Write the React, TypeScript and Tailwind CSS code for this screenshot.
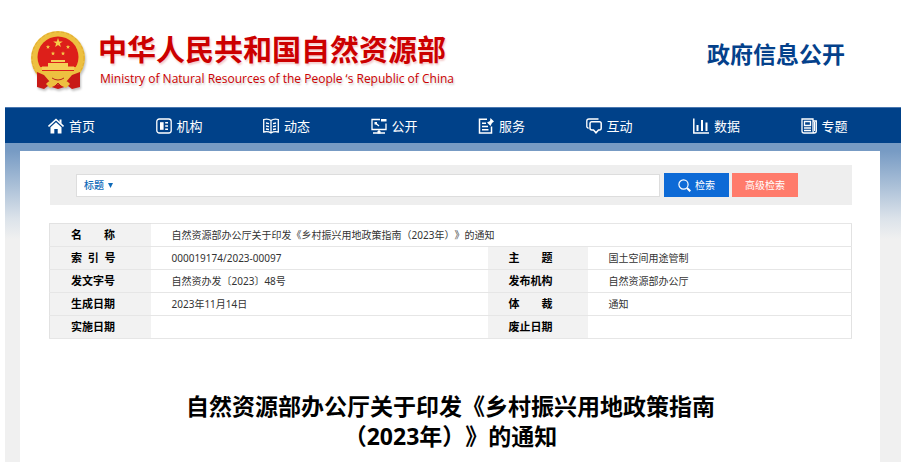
import type { ReactNode } from "react";

function Emblem() {
  const star = "M0 -5 L1.2 -1.6 L4.8 -1.5 L1.9 0.6 L2.9 4 L0 2 L-2.9 4 L-1.9 0.6 L-4.8 -1.5 L-1.2 -1.6 Z";
  return (
    <svg viewBox="0 0 56 60" className="h-[60px] w-14 shrink-0 drop-shadow-[1px_2px_1px_rgba(0,0,0,0.25)]" aria-hidden="true">
      <circle cx="28" cy="28" r="27" fill="#edc040" />
      <circle cx="28" cy="28" r="26" fill="none" stroke="#e0aa32" strokeWidth="1" strokeDasharray="3 2" />
      <circle cx="28" cy="27" r="20.500" fill="#dd1f1a" />
      <path d="M7 42 L14 45 L20 52 L28 48 L36 52 L42 45 L50 42 L50 57 L42 59 L38 56 L28 59 L18 56 L14 59 L7 57 Z" fill="#c81a17" />
      <path d="M10 37 H46 L44 43 L36 48 L28 45 L20 48 L12 43 Z" fill="#edc040" />
      <path d="M12 36.500 H44 V40 H12 Z M18 33 H38 V37 H18 Z M21 30 H35 V32 H21 Z" fill="#f5cf57" />
      <path d="M12 40.500 H44" stroke="#dd1f1a" strokeWidth="1" />
      <path d="M20 46 Q28 41 36 46 L33 50 Q38 51 40 54 L36 58 L28 54 L20 58 L16 54 Q18 51 23 50 Z" fill="#edc040" />
      <path d="M22 48 Q28 52 34 48 M25 56 L28 53 L31 56" fill="none" stroke="#b9221a" strokeWidth="1" />
      <g fill="#f6cf4a">
        <path d={star} transform="translate(28 13)" />
        <path d={star} transform="translate(18 17) scale(.45)" />
        <path d={star} transform="translate(38 17) scale(.45)" />
        <path d={star} transform="translate(23 23.500) scale(.45)" />
        <path d={star} transform="translate(33 23.500) scale(.45)" />
      </g>
    </svg>
  );
}

function Icon({ children }: { children: ReactNode }) {
  return (
    <svg viewBox="0 0 16 16" className="size-4 shrink-0" fill="none" stroke="currentColor" strokeWidth="1.300" aria-hidden="true">
      {children}
    </svg>
  );
}

const menu: { label: string; icon: ReactNode }[] = [
  {
    label: "首页",
    icon: (
      <>
        <path d="M0.500 8.500 L8 1.500 L15.500 8.500" strokeWidth="1.600" />
        <path d="M11.500 1.500 H13.500 V6 L11.500 4 Z M8 4.200 L13.500 9.200 V15.500 H9.700 V11 H6.300 V15.500 H2.500 V9.200 Z" fill="currentColor" stroke="none" />
      </>
    ),
  },
  {
    label: "机构",
    icon: (
      <>
        <rect x="0.800" y="1" width="14.400" height="14" rx="2.500" />
        <rect x="4" y="4.200" width="3.600" height="7.600" fill="currentColor" stroke="none" />
        <path d="M9.200 4.800 H12 M9.200 8 H12 M9.200 11.200 H12" strokeWidth="1.500" />
      </>
    ),
  },
  {
    label: "动态",
    icon: (
      <>
        <path d="M8 2.500 Q5 0.200 0.700 1.500 V14 Q5 13 8 15 Q11 13 15.300 14 V1.500 Q11 0.200 8 2.500 V15" />
        <path d="M3 5 L6 5.600 M3 8 L6 8.600 M3 11 L6 11.500 M13 5 L10 5.600 M13 8 L10 8.600 M13 11 L10 11.500" />
      </>
    ),
  },
  {
    label: "公开",
    icon: (
      <>
        <path d="M9 1.500 H1 V11.500 H15 V5.500 M8 11.500 V15 M2 15 H14" />
        <path d="M10 1 H15.500 V3.500 H10 Z M6.500 13 H9.500 V15.500 H6.500 Z" fill="currentColor" stroke="none" />
        <path d="M3.500 4 H6 V6.500 H3.500 Z" fill="currentColor" stroke="none" />
        <path d="M5 5.500 L8 8" />
      </>
    ),
  },
  {
    label: "服务",
    icon: (
      <>
        <path d="M9 1.200 H1.500 V15 H13.500 V8.500 M4 5.200 H8 M4 8.500 H10 M4 11.700 H10.500" strokeWidth="1.500" />
        <path d="M9 4.500 L12 3 L12.500 0 L16 3.500 L14 5 L12.500 8 Z" fill="currentColor" stroke="none" />
      </>
    ),
  },
  {
    label: "互动",
    icon: (
      <>
        <path d="M5.500 3.700 H13.500 Q15.200 3.700 15.200 5.500 V10 Q15.200 12 13.500 12 H12.500 L10 14.800 L7.500 12 H6 Q4 12 4 10 V5.500 Q4 3.700 5.500 3.700 Z" strokeWidth="1.500" />
        <path d="M12.500 1 H3 Q0.800 1 0.800 3 V9 L2.500 10.500" />
      </>
    ),
  },
  {
    label: "数据",
    icon: (
      <>
        <path d="M0.800 0.500 V15 H16" strokeWidth="1.500" />
        <path d="M4.500 7 V13 M9 2 V13 M13.500 4.500 V13" strokeWidth="2" />
      </>
    ),
  },
  {
    label: "专题",
    icon: (
      <>
        <path d="M12 13 V1 H1 V13 Q1 15 3 15 H13 Q15.300 15 15.300 13 V3 H12 M12 13 Q12 15 13.500 15" />
        <path d="M3.500 3.500 H9.500 V7.500 H3.500 Z" />
        <path d="M3 10 H10 M3 12.500 H10 M13.600 4 V13" />
      </>
    ),
  },
];

const thClass = "bg-[#f2f2f2] pl-[21px] text-left text-[11px] leading-4 font-bold whitespace-pre text-black";
const tdClass = "border-y border-[#e6e6e6] pl-[21px] text-[10px] leading-4 text-[#333]";

const rows: [string, string, string, string][] = [
  ["索  引  号", "000019174/2023-00097", "主　　题", "国土空间用途管制"],
  ["发文字号", "自然资办发〔2023〕48号", "发布机构", "自然资源部办公厅"],
  ["生成日期", "2023年11月14日", "体　　裁", "通知"],
  ["实施日期", "", "废止日期", ""],
];

export default function App() {
  return (
    <div className="bg-white pb-[7px] pl-[5px] font-['Noto_Sans','Noto_Sans_CJK_SC',sans-serif] [text-spacing-trim:space-all]">
      <header className="flex h-[107px] items-start justify-between pr-14 pl-[25px]">
        <div className="flex gap-3 pt-[30px]">
          <Emblem />
          <div className="pt-px text-[#cc0000]">
            <h1 className="text-[29px] leading-[38px] font-bold whitespace-nowrap [text-shadow:1px_2px_2px_rgba(200,0,0,0.2)]">中华人民共和国自然资源部</h1>
            <p className="pl-0.5 font-['Open_Sans','Noto_Sans',sans-serif] text-[12px] leading-5 whitespace-nowrap [text-shadow:1px_2px_2px_rgba(0,0,0,0.2)]">
              Ministry of Natural Resources of the People ‘s Republic of China
            </p>
          </div>
        </div>
        <p className="pt-[38px] text-[23px] leading-8 font-bold whitespace-nowrap text-[#04418b]">政府信息公开</p>
      </header>

      <nav className="h-9 border-t border-[#4a78b0] bg-[#004189] pr-[21px] pl-[15px] text-white">
        <ul className="grid h-full grid-cols-8">
          {menu.map((item) => (
            <li key={item.label} className="flex items-center pl-7">
              <a href="#" className="flex items-center gap-[5px] text-[13px] leading-5">
                <Icon>{item.icon}</Icon>
                {item.label}
              </a>
            </li>
          ))}
        </ul>
      </nav>

      <div className="bg-[#f0f0f0] bg-[linear-gradient(to_bottom,#779bc4_0px,#779bc4_8px,#dce3ea_76px,#f0f0f0_96px)] pt-2 pr-[21px] pl-[15px]">
        <main className="bg-white pt-3.5 pr-7 pb-[11px] pl-[29px]">
          <form className="ml-px flex h-10 items-center bg-[#eee] pl-[26px] text-[10px]" onSubmit={(e) => e.preventDefault()}>
            <div className="flex h-[23px] min-w-0 grow items-center border border-[#ddd] bg-white pl-[7px]">
              <select aria-label="检索范围" className="w-[22px] appearance-none bg-transparent font-medium text-[#0e6ab8] outline-none">
                <option>标题</option>
                <option>正文</option>
              </select>
              <svg viewBox="0 0 5 5" className="ml-0.5 size-[5px] shrink-0" aria-hidden="true">
                <path d="M0 0 H5 L2.500 5 Z" fill="#0e6ab8" />
              </svg>
              <input type="text" aria-label="检索词" className="ml-2 h-full min-w-0 grow bg-transparent outline-none" />
            </div>
            <button type="submit" className="ml-1 flex h-6 w-[65px] shrink-0 items-center justify-center gap-1 bg-[#0d6ad6] text-white">
              <svg viewBox="0 0 13 13" className="size-[13px]" fill="none" stroke="currentColor" aria-hidden="true">
                <circle cx="5.500" cy="5.500" r="4.600" strokeWidth="1.200" />
                <path d="M9 9 L12.300 12.300" strokeWidth="2" />
              </svg>
              检索
            </button>
            <button type="button" className="mr-[54px] ml-[3px] h-6 w-[66px] shrink-0 bg-[#ff7b6b] text-white">高级检索</button>
          </form>

          <table className="mt-[18px] w-full table-fixed border-collapse border border-[#e2e2e2]">
            <colgroup>
              <col className="w-[101px]" />
              <col />
              <col className="w-[100px]" />
              <col className="w-[264px]" />
            </colgroup>
            <tbody>
              <tr className="h-[23px] border-b border-[#e6e6e6]">
                <th scope="row" className={thClass}>名　　称</th>
                <td className={tdClass} colSpan={3}>自然资源部办公厅关于印发《乡村振兴用地政策指南（2023年）》的通知</td>
              </tr>
              {rows.map(([a, b, c, d]) => (
                <tr key={a} className="h-[23px] border-b border-[#e6e6e6]">
                  <th scope="row" className={thClass}>{a}</th>
                  <td className={tdClass}>{b}</td>
                  <th scope="row" className={thClass}>{c}</th>
                  <td className={tdClass}>{d}</td>
                </tr>
              ))}
            </tbody>
          </table>

          <h2 className="mt-[52px] text-center text-[23px] leading-[30px] font-bold text-black">
            自然资源部办公厅关于印发《乡村振兴用地政策指南
            <br />
            （2023年）》的通知
          </h2>
        </main>
      </div>
    </div>
  );
}
